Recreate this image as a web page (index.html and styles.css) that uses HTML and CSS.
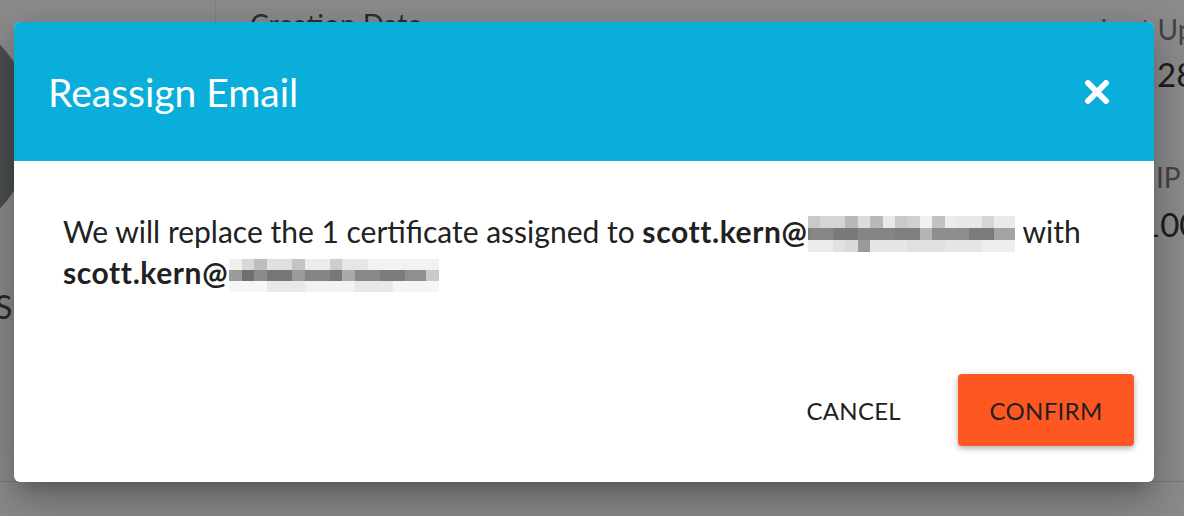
FILE: index.html
```html
<!DOCTYPE html>
<html lang="en">
<head>
<meta charset="utf-8">
<title>Reassign Email</title>
<link rel="stylesheet" href="styles.css">
</head>
<body>
<div class="page">
  <div class="left-col">
    <div class="avatar"></div>
    <div class="name-tail">S</div>
  </div>
  <div class="mid-col">
    <div class="field-label">Creation Date</div>
  </div>
  <div class="right-col">
    <div class="field-label muted">Last Up</div>
    <div class="field-value">28</div>
    <div class="field-label muted ip">IP A</div>
    <div class="field-value ipv">100</div>
  </div>
</div>
<div class="backdrop"></div>
<div class="dialog" role="dialog" aria-labelledby="dlg-title">
  <div class="dialog-header">
    <h2 class="dialog-title" id="dlg-title">Reassign Email</h2>
    <button class="close-btn" aria-label="Close">
      <svg width="26" height="26" viewBox="0 0 26 26" aria-hidden="true">
        <path d="M4 4 L22 22 M22 4 L4 22" stroke="#fff" stroke-width="6" stroke-linecap="round" fill="none"/>
      </svg>
    </button>
  </div>
  <div class="dialog-body">
    <p class="message">We will replace the 1 certificate assigned to <b>scott.kern@</b><span class="mosaic mosaic-a" aria-label="redacted domain"></span> with <b>scott.kern@</b><span class="mosaic mosaic-b" aria-label="redacted domain"></span></p>
  </div>
  <div class="dialog-footer">
    <button class="btn btn-text">CANCEL</button>
    <button class="btn btn-primary">CONFIRM</button>
  </div>
</div>
</body>
</html>
```

FILE: styles.css
```css
html, body {
  margin: 0;
  padding: 0;
}
body {
  width: 1184px;
  height: 516px;
  overflow: hidden;
  background: #ffffff;
  font-family: "Lato", "Open Sans", "Noto Sans", sans-serif;
  position: relative;
}

/* ---------- background page ---------- */
.page {
  display: flex;
  height: 481px;
  border-bottom: 1px solid #dedede;
}
.left-col {
  width: 215px;
  border-right: 1px solid #e0e9f2;
  display: flex;
  flex-direction: column;
  overflow: hidden;
}
.avatar {
  width: 237px;
  height: 237px;
  border-radius: 50%;
  background: #889391;
  margin-top: 8px;
  margin-left: -204px;
  flex: none;
}
.name-tail {
  margin-top: 44px;
  margin-left: -5px;
  font-size: 32px;
  line-height: 36px;
  color: #4d4d4d;
}
.mid-col {
  flex: 1;
  padding: 8px 0 0 34px;
}
.field-label {
  font-size: 28px;
  line-height: 32px;
  color: #555;
}
.field-label.muted {
  color: #7d7d7d;
}
.right-col {
  width: 84px;
  padding-top: 13px;
  white-space: nowrap;
  overflow: hidden;
}
.field-value {
  font-size: 33px;
  line-height: 36px;
  margin-top: 11px;
  padding-left: 57px;
  color: #363636;
}
.field-label.ip {
  margin-top: 69px;
  padding-left: 56px;
}
.field-value.ipv {
  margin-top: 13px;
  padding-left: 41px;
}

/* ---------- backdrop ---------- */
.backdrop {
  position: absolute;
  inset: 0;
  background: rgba(0, 0, 0, 0.45);
}

/* ---------- dialog ---------- */
.dialog {
  position: absolute;
  left: 14px;
  top: 22px;
  width: 1140px;
  height: 460px;
  background: #fff;
  border-radius: 6px;
  overflow: hidden;
  display: flex;
  flex-direction: column;
  box-shadow: 0 11px 15px -7px rgba(0,0,0,.2), 0 24px 38px 3px rgba(0,0,0,.14), 0 9px 46px 8px rgba(0,0,0,.12);
}
.dialog-header {
  height: 139px;
  flex: none;
  background: #09aeda;
  display: flex;
  align-items: center;
  justify-content: space-between;
  padding: 0 44px 0 34px;
}
.dialog-title {
  margin: 0;
  color: #fff;
  font-size: 39px;
  font-weight: 400;
  line-height: 44px;
}
.close-btn {
  width: 26px;
  height: 26px;
  padding: 0;
  border: 0;
  background: none;
  display: flex;
  cursor: pointer;
}
.dialog-body {
  flex: 1;
  padding: 50px 49px 0;
}
.message {
  margin: 0;
  font-size: 30px;
  line-height: 40px;
  color: #212121;
}
.message b {
  font-weight: 700;
  letter-spacing: 0.6px;
}
.mosaic {
  display: inline-block;
  vertical-align: -9px;
  height: 36px;
  background-repeat: no-repeat;
  background-size: 100% 12px;
}
.mosaic-a {
  width: 207px;
  margin-left: 1px;
  background-position: 0 0, 0 12px, 0 24px;
  background-image:
    linear-gradient(to right, #c9c9c9 0 6%, #d5d5d5 6% 18%, #b9b9b9 18% 24%, #dcdcdc 24% 30%, #b9b9b9 30% 36%, #e9e9e9 36% 42%, #c9c9c9 42% 48%, #d0d0d0 48% 54%, #f0f0f0 54% 60%, #c2c2c2 60% 66%, #ececec 66% 72%, #e8e8e8 72% 84%, #d5d5d5 84% 90%, #eaeaea 90% 100%),
    linear-gradient(to right, #7f7f7f 0 1.5%, #878787 1.5% 12%, #7a7a7a 12% 24%, #858585 24% 42%, #7f7f7f 42% 54%, #b4b4b4 54% 60%, #8e8e8e 60% 78%, #7b7b7b 78% 90%, #a3a3a3 90% 100%),
    linear-gradient(to right, #ececec 0 12%, #e2e2e2 12% 18%, #dadada 18% 24%, #9a9a9a 24% 30%, #e6e6e6 30% 48%, #e0e0e0 48% 66%, #e6e6e6 66% 84%, #ededed 84% 100%);
}
.mosaic-b {
  width: 210px;
  margin-left: 1px;
  height: 33px;
  vertical-align: -8px;
  background-size: 100% 11px;
  background-position: 0 0, 0 11px, 0 22px;
  background-image:
    linear-gradient(to right, #f0f0f0 0 6%, #d8d8d8 6% 12%, #bdbdbd 12% 18%, #e0e0e0 18% 30%, #c4c4c4 30% 36%, #ececec 36% 48%, #cdcdcd 48% 54%, #e6e6e6 54% 66%, #f2f2f2 66% 100%),
    linear-gradient(to right, #9b9b9b 0 6%, #6f6f6f 6% 12%, #8b8b8b 12% 18%, #777 18% 30%, #9a9a9a 30% 36%, #858585 36% 48%, #777 48% 54%, #a9a9a9 54% 60%, #898989 60% 72%, #7c7c7c 72% 84%, #8f8f8f 84% 94%, #c9c9c9 94% 100%),
    linear-gradient(to right, #f6f6f6 0 18%, #e9e9e9 18% 36%, #f2f2f2 36% 60%, #e8e8e8 60% 78%, #f5f5f5 78% 100%);
}
.dialog-footer {
  flex: none;
  display: flex;
  justify-content: flex-end;
  align-items: center;
  gap: 57px;
  padding: 0 20px 36px;
}
.btn {
  font-family: inherit;
  font-size: 24px;
  letter-spacing: 0.3px;
  color: #212121;
  border: 0;
  background: none;
  padding: 0;
  height: 72px;
  cursor: pointer;
}
.btn-primary {
  width: 176px;
  background: #ff5722;
  border-radius: 4px;
  box-shadow: 0 3px 5px rgba(0,0,0,.2), 0 1px 10px rgba(0,0,0,.12);
}
```
